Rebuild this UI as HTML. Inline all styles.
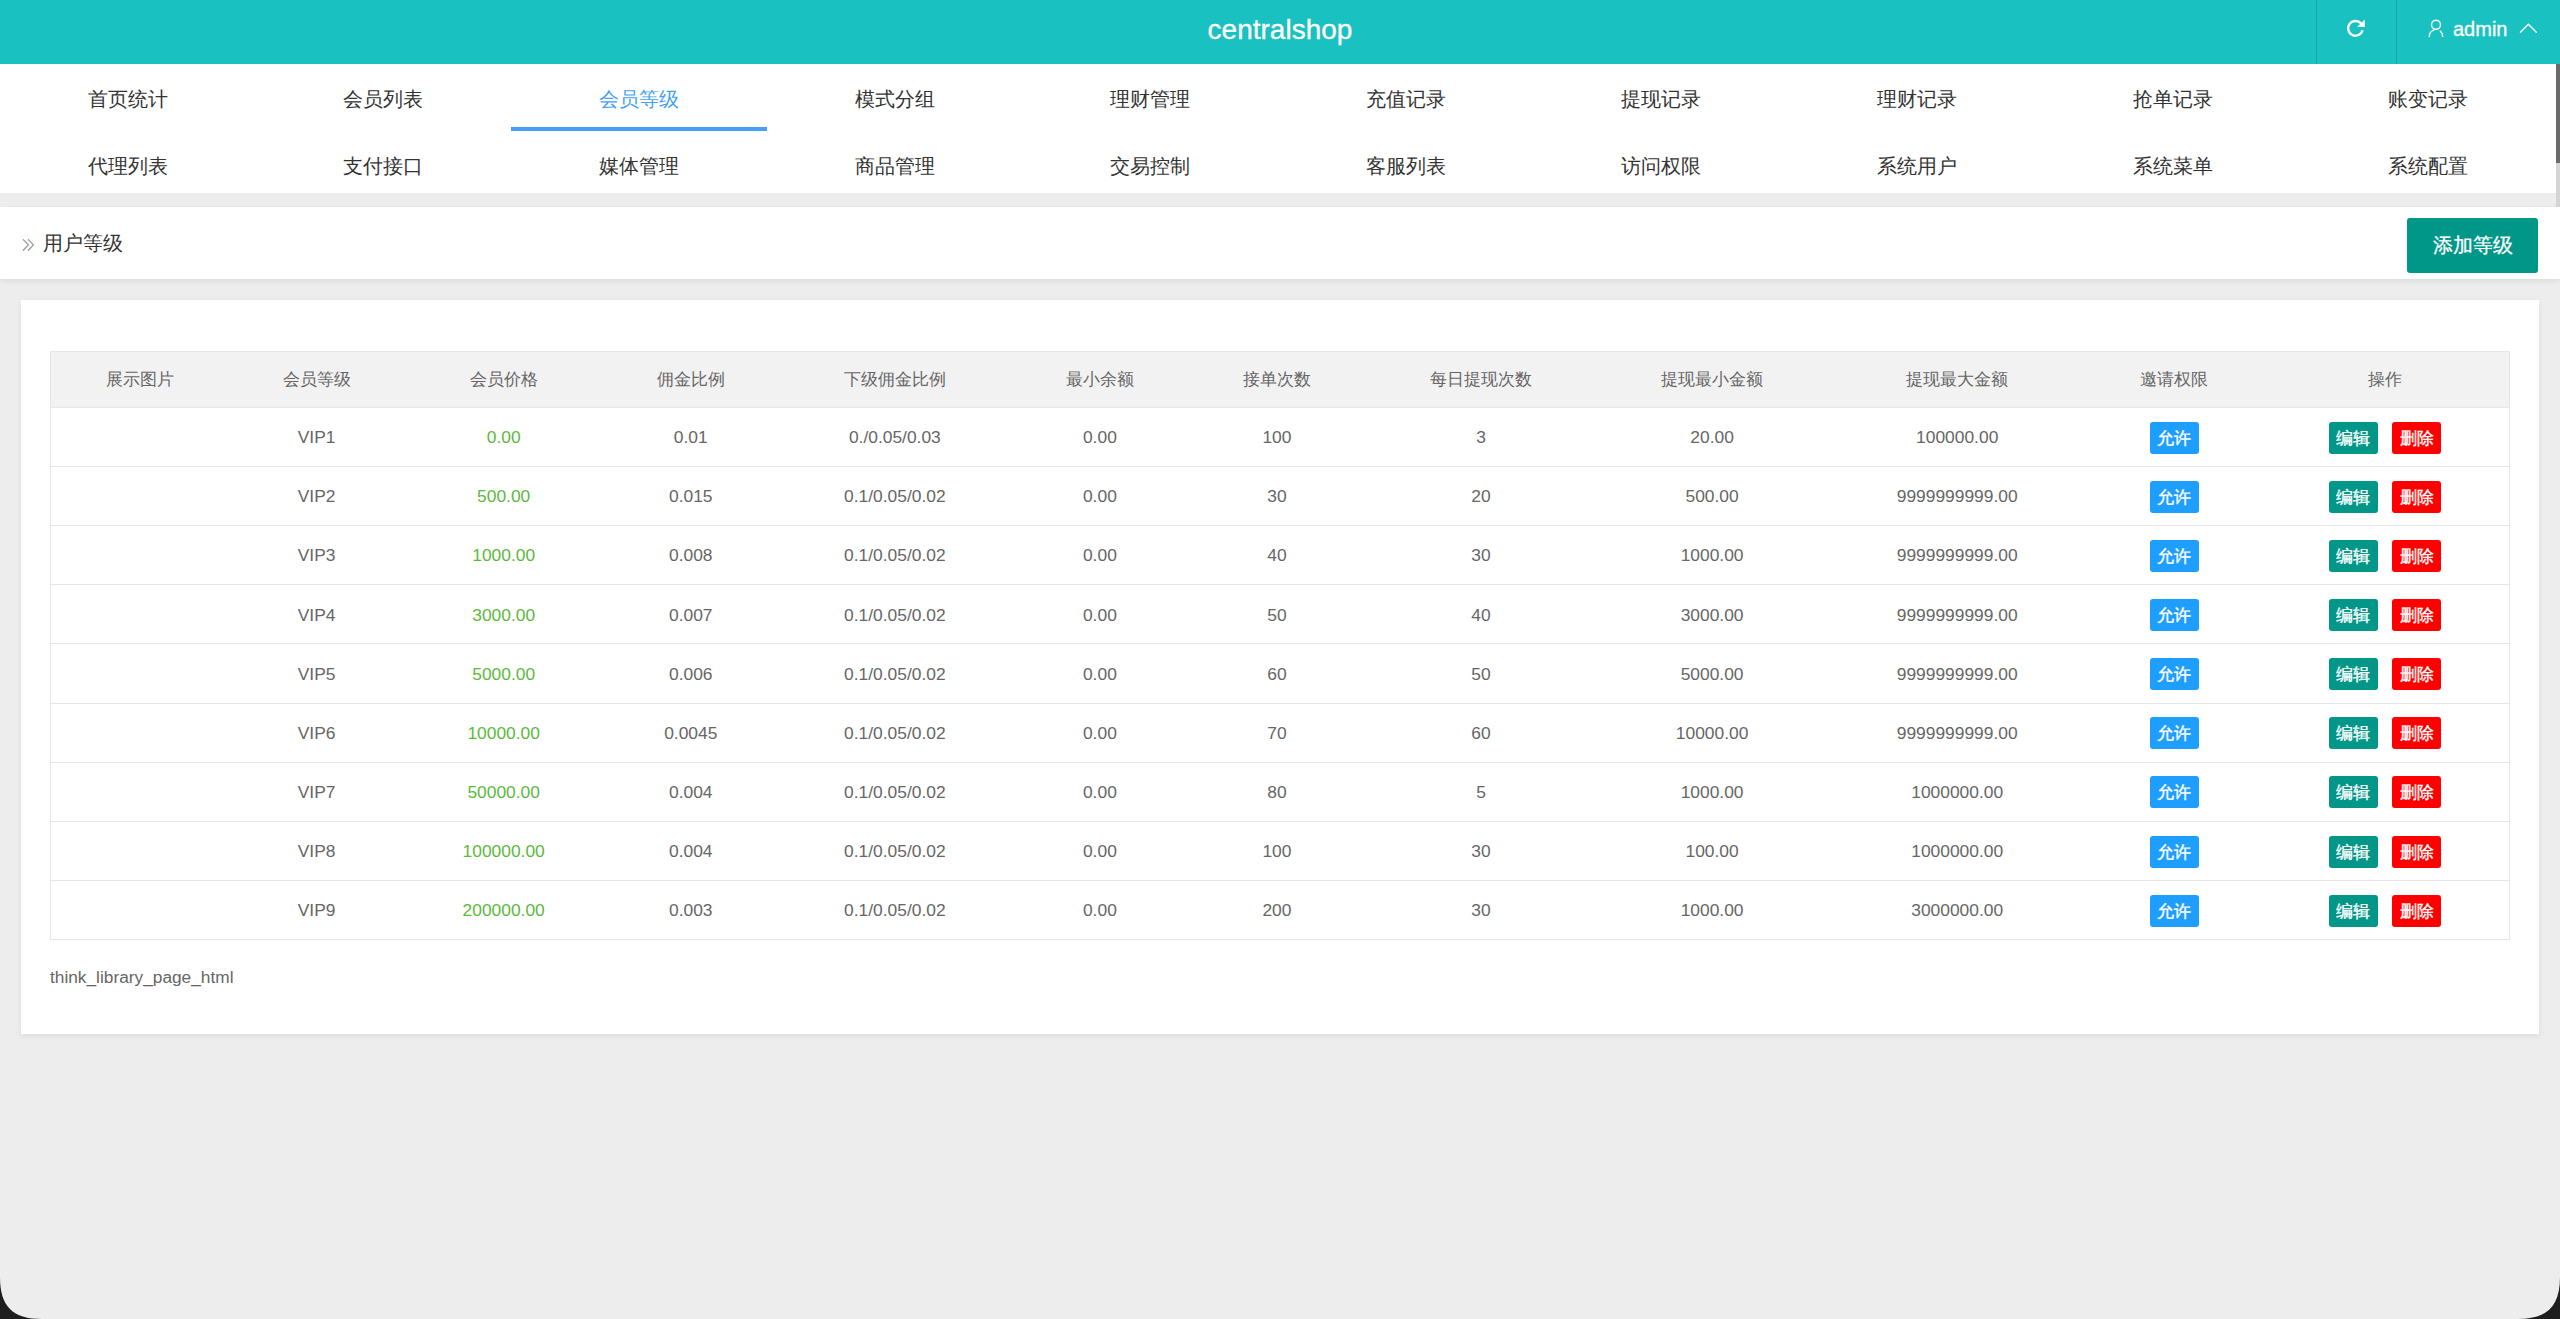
<!DOCTYPE html>
<html><head><meta charset="utf-8">
<style>
*{margin:0;padding:0;box-sizing:border-box}
html,body{width:2560px;height:1319px;overflow:hidden;background:#000}
body{font-family:"Liberation Sans",sans-serif;color:#666}
#win{position:absolute;left:0;top:0;width:2560px;height:1319px;background:#ededed;overflow:hidden}
#corner{position:absolute;left:0;top:0;pointer-events:none}
#hdr{position:absolute;left:0;top:0;width:2560px;height:64px;background:#19c1c1;color:#fff}
#title{position:absolute;left:0;width:2560px;top:0;height:64px;line-height:60px;text-align:center;font-size:28px;-webkit-text-stroke:0.3px #fff}
.sep{position:absolute;top:0;width:1px;height:64px;background:rgba(0,0,0,.12)}
#admin{position:absolute;left:2453px;top:0;line-height:58px;font-size:20px;-webkit-text-stroke:0.3px #fff}
#nav{position:absolute;left:0;top:64px;width:2556px;height:129px;background:#fff}
#nav div{position:absolute;width:255.6px;height:67px;line-height:70px;text-align:center;font-size:20px;color:#333}
#nav div.on{color:#459ff5}
#nav div.on:after{content:"";position:absolute;left:0;top:63px;width:255.6px;height:4px;background:#459ff5}
#sb{position:absolute;left:2556px;top:64px;width:4px;height:143px;background:#d5d5d5}
#sbt{position:absolute;left:2556px;top:64px;width:4px;height:99px;background:#6b6b6b}
#crumb{position:absolute;left:0;top:207px;width:2560px;height:72px;background:#fff;box-shadow:0 2px 6px rgba(0,0,0,.08)}
#crumb .t{position:absolute;left:43px;top:0;line-height:72px;font-size:20px;color:#333}
#addbtn{position:absolute;left:2407px;top:11px;width:131px;height:54.5px;background:#009688;color:#fff;border-radius:3px;font-size:20px;text-align:center;line-height:54.5px;-webkit-text-stroke:0.3px #fff}
#card{position:absolute;left:21px;top:300px;width:2517.5px;height:733.5px;background:#fff;box-shadow:0 2px 6px rgba(0,0,0,.075)}
table{position:absolute;left:29px;top:51px;border-collapse:collapse;table-layout:fixed;width:2460px;border:1px solid #e6e6e6}
th{height:55.875px;background:#f2f2f2;font-weight:normal;font-size:17.4px;padding-bottom:1px;color:#666;text-align:center;border-bottom:1px solid #e6e6e6}
td{height:59.125px;font-size:17.4px;padding-top:1.5px;color:#666;text-align:center;border-bottom:1px solid #e6e6e6}
td.g{color:#5cb93d}
.b{display:inline-block;height:32px;line-height:32px;padding:0 7.5px;color:#fff;border-radius:3px;font-size:17.4px;vertical-align:middle;-webkit-text-stroke:0.35px #fff}
.bl{background:#1e9fff}
.gr{background:#009688}
.rd{background:#ff0000;margin-left:14.5px}
#foot{position:absolute;left:29px;top:667px;font-size:17.3px;color:#666}
</style></head><body>
<div id="win">
<div id="hdr"><div id="title">centralshop</div>
<div class="sep" style="left:2316px"></div><div class="sep" style="left:2396px"></div>
<div id="admin">admin</div>
<svg style="position:absolute;left:0;top:0" width="2560" height="64" viewBox="0 0 2560 64">
<g transform="translate(2336,10)" fill="none" stroke="#fff">
<path d="M25.1 13.6 A7.35 7.35 0 1 0 26.6 20.25" stroke-width="2.3"/>
<path d="M28.8 9.4 L28.8 16.9 L21.1 16.9 Z" fill="#fff" stroke="none"/>
</g>
<g transform="translate(2420,10)" fill="none" stroke="#fff" stroke-width="1.4" stroke-linecap="round">
<circle cx="16" cy="14.75" r="4.5"/>
<path d="M9.3 26.4 A7 7 0 0 1 14 19.8"/>
<path d="M20.3 21.1 A7 7 0 0 1 22.7 26.4"/>
</g>
<path d="M2520.5 32.2 L2528.4 24.3 L2536.3 32.2" fill="none" stroke="#fff" stroke-width="1.5" stroke-linecap="round"/>
</svg>
</div>
<div id="nav"><div style="left:0.0px;top:0">首页统计</div><div style="left:255.6px;top:0">会员列表</div><div class="on" style="left:511.2px;top:0">会员等级</div><div style="left:766.8px;top:0">模式分组</div><div style="left:1022.4px;top:0">理财管理</div><div style="left:1278.0px;top:0">充值记录</div><div style="left:1533.6px;top:0">提现记录</div><div style="left:1789.2px;top:0">理财记录</div><div style="left:2044.8px;top:0">抢单记录</div><div style="left:2300.4px;top:0">账变记录</div><div style="left:0.0px;top:67px">代理列表</div><div style="left:255.6px;top:67px">支付接口</div><div style="left:511.2px;top:67px">媒体管理</div><div style="left:766.8px;top:67px">商品管理</div><div style="left:1022.4px;top:67px">交易控制</div><div style="left:1278.0px;top:67px">客服列表</div><div style="left:1533.6px;top:67px">访问权限</div><div style="left:1789.2px;top:67px">系统用户</div><div style="left:2044.8px;top:67px">系统菜单</div><div style="left:2300.4px;top:67px">系统配置</div></div>
<div id="sb"></div><div id="sbt"></div>
<div id="crumb"><svg style="position:absolute;left:0;top:0" width="60" height="72" viewBox="0 207 60 72">
<path d="M23.3 239.6 L28.4 244.9 L23.3 250.2 M28.4 239.6 L33.5 244.9 L28.4 250.2" fill="none" stroke="#999" stroke-width="1.3" stroke-linecap="round" stroke-linejoin="round"/>
</svg><div class="t">用户等级</div><div id="addbtn">添加等级</div></div>
<div id="card">
<table><colgroup><col style="width:178px"><col style="width:176px"><col style="width:198px"><col style="width:176px"><col style="width:232px"><col style="width:178px"><col style="width:176px"><col style="width:232px"><col style="width:230px"><col style="width:260px"><col style="width:174px"><col style="width:248px"></colgroup><thead><tr><th>展示图片</th><th>会员等级</th><th>会员价格</th><th>佣金比例</th><th>下级佣金比例</th><th>最小余额</th><th>接单次数</th><th>每日提现次数</th><th>提现最小金额</th><th>提现最大金额</th><th>邀请权限</th><th>操作</th></tr></thead><tbody><tr><td></td><td>VIP1</td><td class=g>0.00</td><td>0.01</td><td>0./0.05/0.03</td><td>0.00</td><td>100</td><td>3</td><td>20.00</td><td>100000.00</td><td><span class="b bl">允许</span></td><td><span class="b gr">编辑</span><span class="b rd">删除</span></td></tr><tr><td></td><td>VIP2</td><td class=g>500.00</td><td>0.015</td><td>0.1/0.05/0.02</td><td>0.00</td><td>30</td><td>20</td><td>500.00</td><td>9999999999.00</td><td><span class="b bl">允许</span></td><td><span class="b gr">编辑</span><span class="b rd">删除</span></td></tr><tr><td></td><td>VIP3</td><td class=g>1000.00</td><td>0.008</td><td>0.1/0.05/0.02</td><td>0.00</td><td>40</td><td>30</td><td>1000.00</td><td>9999999999.00</td><td><span class="b bl">允许</span></td><td><span class="b gr">编辑</span><span class="b rd">删除</span></td></tr><tr><td></td><td>VIP4</td><td class=g>3000.00</td><td>0.007</td><td>0.1/0.05/0.02</td><td>0.00</td><td>50</td><td>40</td><td>3000.00</td><td>9999999999.00</td><td><span class="b bl">允许</span></td><td><span class="b gr">编辑</span><span class="b rd">删除</span></td></tr><tr><td></td><td>VIP5</td><td class=g>5000.00</td><td>0.006</td><td>0.1/0.05/0.02</td><td>0.00</td><td>60</td><td>50</td><td>5000.00</td><td>9999999999.00</td><td><span class="b bl">允许</span></td><td><span class="b gr">编辑</span><span class="b rd">删除</span></td></tr><tr><td></td><td>VIP6</td><td class=g>10000.00</td><td>0.0045</td><td>0.1/0.05/0.02</td><td>0.00</td><td>70</td><td>60</td><td>10000.00</td><td>9999999999.00</td><td><span class="b bl">允许</span></td><td><span class="b gr">编辑</span><span class="b rd">删除</span></td></tr><tr><td></td><td>VIP7</td><td class=g>50000.00</td><td>0.004</td><td>0.1/0.05/0.02</td><td>0.00</td><td>80</td><td>5</td><td>1000.00</td><td>1000000.00</td><td><span class="b bl">允许</span></td><td><span class="b gr">编辑</span><span class="b rd">删除</span></td></tr><tr><td></td><td>VIP8</td><td class=g>100000.00</td><td>0.004</td><td>0.1/0.05/0.02</td><td>0.00</td><td>100</td><td>30</td><td>100.00</td><td>1000000.00</td><td><span class="b bl">允许</span></td><td><span class="b gr">编辑</span><span class="b rd">删除</span></td></tr><tr><td></td><td>VIP9</td><td class=g>200000.00</td><td>0.003</td><td>0.1/0.05/0.02</td><td>0.00</td><td>200</td><td>30</td><td>1000.00</td><td>3000000.00</td><td><span class="b bl">允许</span></td><td><span class="b gr">编辑</span><span class="b rd">删除</span></td></tr></tbody></table>
<div id="foot">think_library_page_html</div>
</div>
</div>
<svg style="position:absolute;left:0;top:0" width="2560" height="1319" viewBox="0 0 2560 1319">
<path d="M0 1277 C0 1306.3 12.7 1319 42 1319 L0 1319 Z" fill="#1e1e1e"/>
<path d="M2560 1277 C2560 1306.3 2547.3 1319 2518 1319 L2560 1319 Z" fill="#1e1e1e"/>
</svg>
</body></html>
